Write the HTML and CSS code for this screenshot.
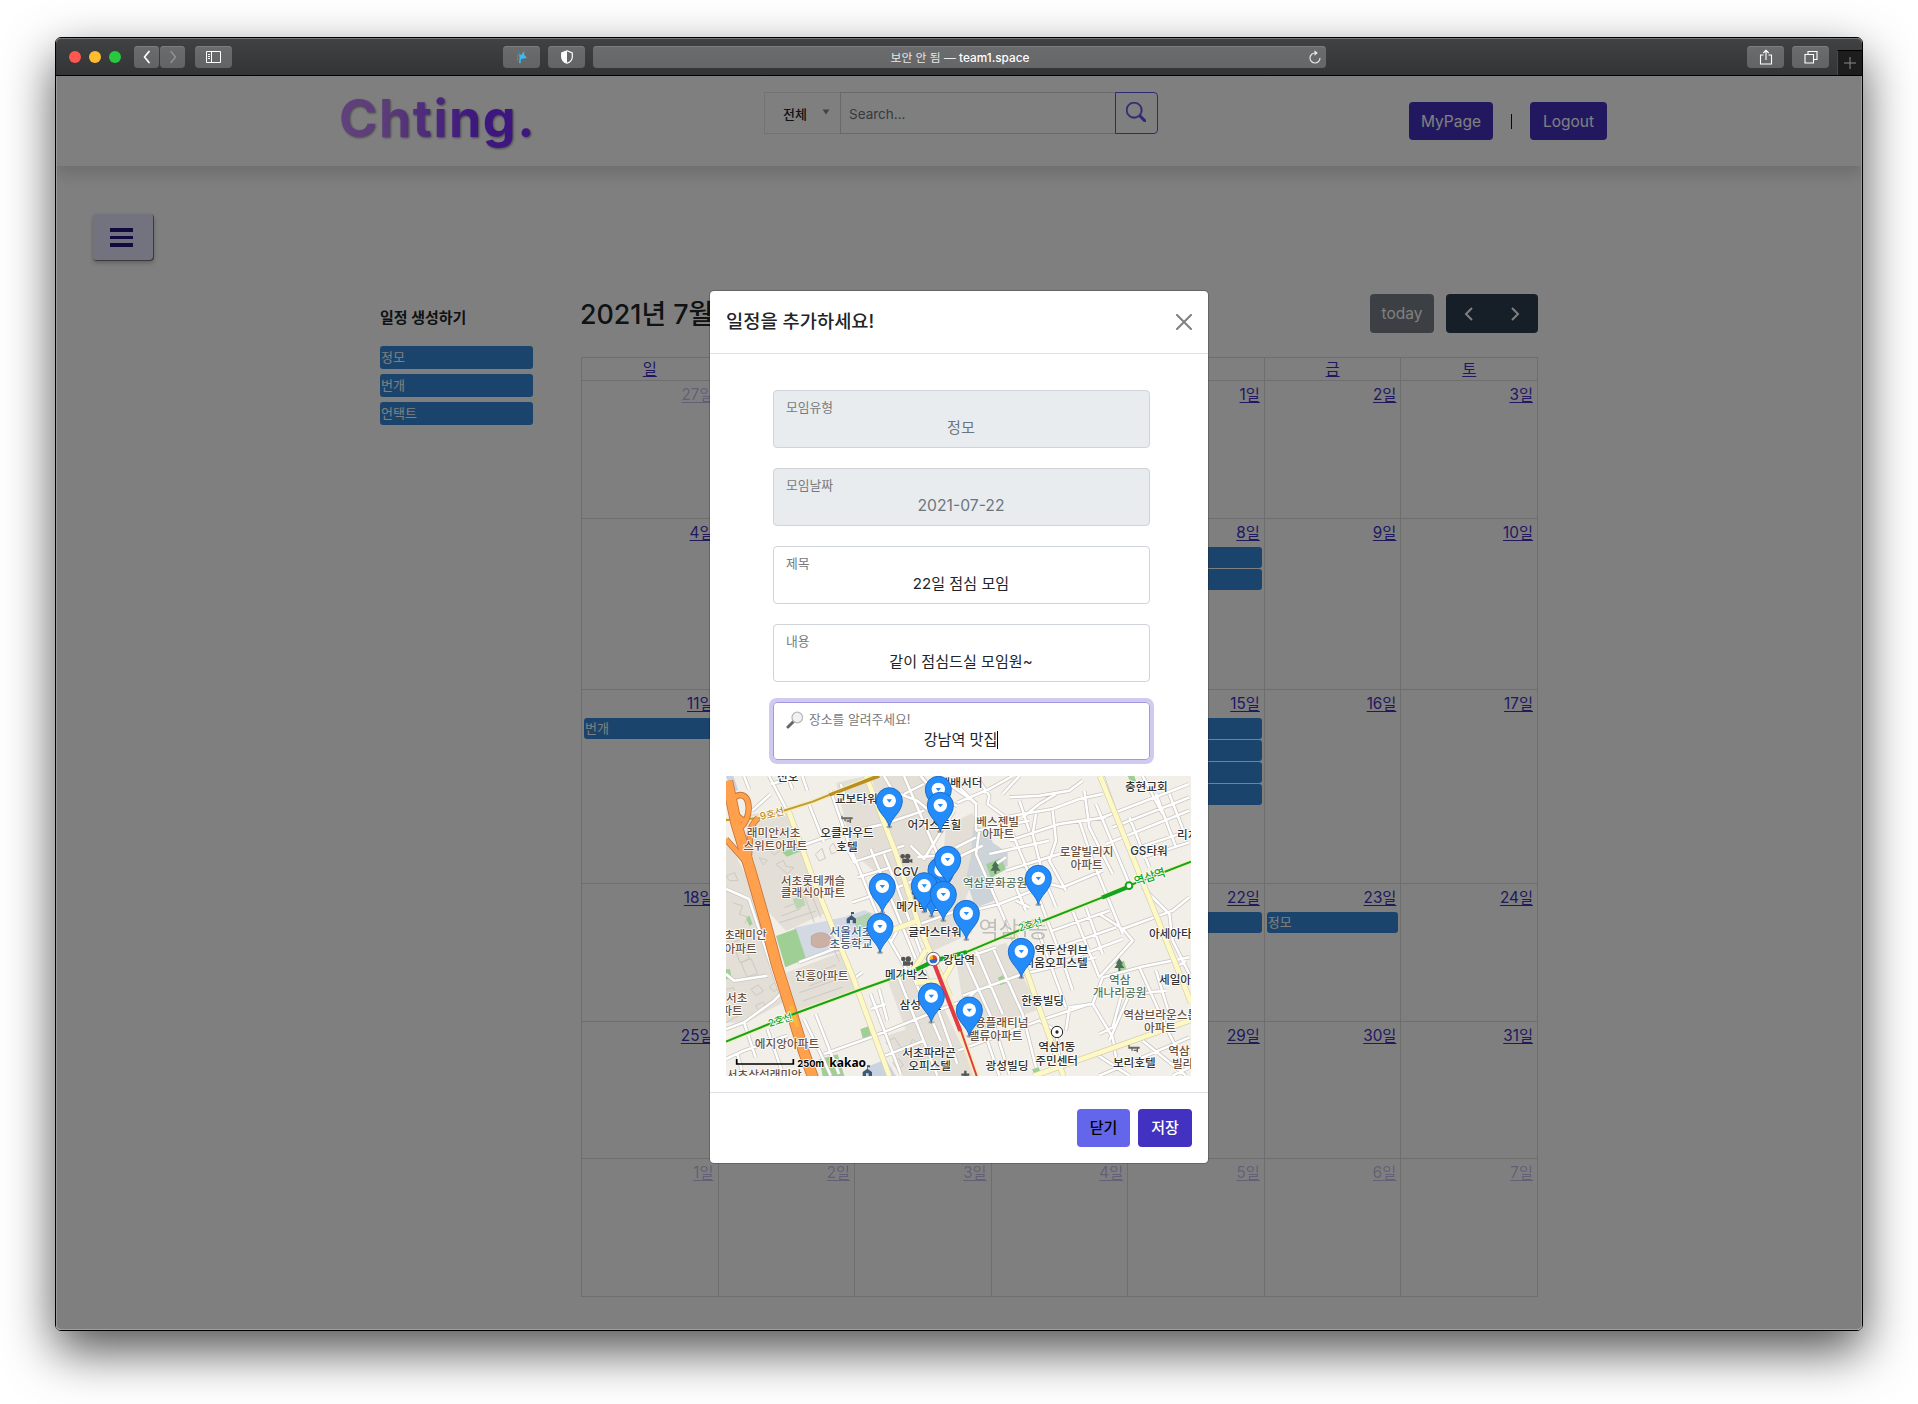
FILE: index.html
```html
<!DOCTYPE html>
<html lang="ko">
<head>
<meta charset="utf-8">
<title>team1.space</title>
<link rel="stylesheet" href="styles.css">
</head>
<body>
<div class="window">
  <div class="toolbar">
    <div class="lights"><i class="red"></i><i class="yellow"></i><i class="green"></i></div>
    <div class="tb-btn back"><svg width="10" height="16" viewBox="0 0 10 16"><path d="M7 2.500 2.500 8 7 13.500" fill="none" stroke="#fff" stroke-width="1.7" stroke-linecap="round" stroke-linejoin="round"/></svg></div>
    <div class="tb-btn fwd"><svg width="10" height="16" viewBox="0 0 10 16"><path d="M3 2.500 7.500 8 3 13.500" fill="none" stroke="#919293" stroke-width="1.5" stroke-linecap="round" stroke-linejoin="round"/></svg></div>
    <div class="tb-btn side"><svg width="15" height="13" viewBox="0 0 15 13"><path d="M.5.5h14v11H.500zM5.500.5v11M2 3.500h2M2 5.500h2M2 7.500h2" fill="none" stroke="#fff" stroke-width="1"/></svg></div>
    <div class="tb-btn ext"><svg width="14" height="14" viewBox="0 0 14 14"><path d="M4 4 6 5 9.500 1 9 4.500 12 8 8.500 8.500 6 9 5.500 13.500 4 13l.5-5z" fill="#37bdf2"/><path d="M2.500 4.500V11M4.500 1.500 2.500 4.500" stroke="#2c93c4" fill="none"/></svg></div>
    <div class="tb-btn shield"><svg width="14" height="14" viewBox="0 0 14 14"><path d="M7 .8 12.300 3v4c0 3-2.300 5.200-5.300 6.300C4 12.200 1.700 10 1.700 7V3z" fill="none" stroke="#fff" stroke-width="1.2"/><path d="M7 .8v12.500C4 12.200 1.700 10 1.700 7V3z" fill="#fff"/></svg></div>
    <div class="url"><span>보안 안 됨 — <b>team1.space</b></span>
      <svg class="reload" width="14" height="15" viewBox="0 0 14 15"><path d="M12 8a5 5 0 1 1-5-5h1.500" fill="none" stroke="#e6e6e6" stroke-width="1.200"/><path d="M6.500.3 9.800 3 6.500 5.700z" fill="#e6e6e6"/></svg>
    </div>
    <div class="tb-btn share"><svg width="14" height="16" viewBox="0 0 14 16"><path d="M4.500 6H1.500v9h11V6h-3M7 11V1.500M4.300 4 7 1.300 9.700 4" fill="none" stroke="#fff" stroke-width="1.100"/></svg></div>
    <div class="tb-btn tabs"><svg width="14" height="14" viewBox="0 0 14 14"><path d="M1 4.500h8.500V13H1zM4 4.500V1.500h9v8H9.500" fill="none" stroke="#fff" stroke-width="1.100"/></svg></div>
    <div class="newtab"><svg width="12" height="12" viewBox="0 0 12 12"><path d="M6 0v12M0 6h12" stroke="#8b8b8b"/></svg></div>
  </div>

  <div class="page">
    <header class="header">
      <div class="logo">Chting.</div>
      <div class="search">
        <div class="select"><span>전체</span><svg width="8" height="6" viewBox="0 0 8 6"><path d="M.5.5h7L4 5.500z" fill="#888"/></svg></div>
        <div class="query">Search...</div>
        <div class="go"><svg width="20" height="20" viewBox="0 0 16 16" fill="#5d57e8" stroke="#5d57e8" stroke-width=".5"><path d="M11.742 10.344a6.500 6.500 0 1 0-1.397 1.398h-.001c.03.04.062.078.098.115l3.850 3.850a1 1 0 0 0 1.415-1.414l-3.850-3.850a1.007 1.007 0 0 0-.115-.1zM12 6.500a5.500 5.500 0 1 1-11 0 5.500 5.500 0 0 1 11 0z"/></svg></div>
      </div>
      <nav class="nav"><a class="btn">MyPage</a><i class="bar"></i><a class="btn">Logout</a></nav>
    </header>
    <main class="main">
      <div class="menu"><i></i><i></i><i></i></div>
      <div class="board">
        <aside class="aside">
          <h2>일정 생성하기</h2>
          <div class="chip">정모</div><div class="chip">번개</div><div class="chip">언택트</div>
        </aside>
        <section class="calendar">
          <div class="cal-bar">
            <h1>2021년 7월</h1>
            <div class="today">today</div>
            <div class="pager">
              <svg width="10" height="16" viewBox="0 0 10 16"><path d="M8 2 2 8l6 6" fill="none" stroke="#fff" stroke-width="2"/></svg>
              <svg width="10" height="16" viewBox="0 0 10 16"><path d="m2 2 6 6-6 6" fill="none" stroke="#fff" stroke-width="2"/></svg>
            </div>
          </div>
          <div class="grid">
            <div class="head"><a>일</a></div><div class="head"><a>월</a></div><div class="head"><a>화</a></div><div class="head"><a>수</a></div><div class="head"><a>목</a></div><div class="head"><a>금</a></div><div class="head"><a>토</a></div>
            <div class="day other"><a>27일</a></div><div class="day other"><a>28일</a></div><div class="day other"><a>29일</a></div><div class="day other"><a>30일</a></div><div class="day"><a>1일</a></div><div class="day"><a>2일</a></div><div class="day"><a>3일</a></div>
            <div class="day"><a>4일</a></div><div class="day"><a>5일</a></div><div class="day"><a>6일</a></div><div class="day"><a>7일</a></div><div class="day"><a>8일</a><p></p><p></p></div><div class="day"><a>9일</a></div><div class="day"><a>10일</a></div>
            <div class="day"><a>11일</a><p>번개</p></div><div class="day"><a>12일</a></div><div class="day"><a>13일</a></div><div class="day"><a>14일</a></div><div class="day"><a>15일</a><p></p><p></p><p></p><p></p></div><div class="day"><a>16일</a></div><div class="day"><a>17일</a></div>
            <div class="day"><a>18일</a></div><div class="day"><a>19일</a></div><div class="day"><a>20일</a></div><div class="day"><a>21일</a></div><div class="day"><a>22일</a><p></p></div><div class="day"><a>23일</a><p>정모</p></div><div class="day"><a>24일</a></div>
            <div class="day"><a>25일</a></div><div class="day"><a>26일</a></div><div class="day"><a>27일</a></div><div class="day"><a>28일</a></div><div class="day"><a>29일</a></div><div class="day"><a>30일</a></div><div class="day"><a>31일</a></div>
            <div class="day other"><a>1일</a></div><div class="day other"><a>2일</a></div><div class="day other"><a>3일</a></div><div class="day other"><a>4일</a></div><div class="day other"><a>5일</a></div><div class="day other"><a>6일</a></div><div class="day other"><a>7일</a></div>
          </div>
        </section>
      </div>
    </main>

    <div class="backdrop">
      <div class="modal">
        <div class="m-head"><span>일정을 추가하세요!</span><svg width="16" height="16" viewBox="0 0 16 16"><path d="m1 1 14 14M15 1 1 15" stroke="#7f7f7f" stroke-width="2" stroke-linecap="round"/></svg></div>
        <div class="m-body">
          <div class="field off"><label>모임유형</label><div>정모</div></div>
          <div class="field off"><label>모임날짜</label><div class="date">2021-07-22</div></div>
          <div class="field"><label>제목</label><div>22일 점심 모임</div></div>
          <div class="field"><label>내용</label><div>같이 점심드실 모임원~</div></div>
          <div class="field focus"><label><svg width="18" height="18" viewBox="0 0 18 18"><path d="m2 16 5.500-5.500" stroke="#66666a" stroke-width="3" stroke-linecap="round"/><circle cx="11.300" cy="6.500" r="5.300" fill="#f0f1f2" stroke="#b9babb" stroke-width="1.300"/></svg>장소를 알려주세요!</label><div><span class="typed">강남역 맛집</span></div></div>
          <svg class="map" viewBox="0 0 1395 900">
            <defs>
              <g id="pin"><ellipse cx="0" cy="79" rx="9" ry="4" fill="#777" opacity=".6"/><path d="M0 79C-5 50-39 35-39 0a39 39 0 0 1 78 0C39 35 5 50 0 79z" fill="#238cfa" stroke="#1b6dca" stroke-width="3"/><circle r="20" fill="#fff"/><path d="M-8-4H8L0 6z" fill="#238cfa"/></g>
              <path id="tree" d="M0-20 11-4H6L15 9H3v9h-6V9h-12L-6-4h-5z" fill="#4c6f58"/>
              <g id="school" fill="#3e5878"><path d="M-14 16V2L0-8 14 2v14H4V6h-8v10z"/><path d="M-1-18h9v6H1v6h-2z"/></g>
              <g id="bed" fill="#666"><path d="M-17-13h4v5h30v6h-5V9H8V5h-9v-4h9v-3h-12v6h-4v-6h-9z"/></g>
              <g id="cam" fill="#555"><circle cx="-11" cy="-7" r="7"/><circle cx="4" cy="-7" r="8"/><path d="M-12 0h21v4l9-4v13l-9-4v4h-21z"/></g>
            </defs>
            <rect width="1395" height="900" fill="#f2efe9"/>
            <g fill="#e3dfd7">
              <path d="M50 120 185 97 270 332 300 410 180 465 120 400zM0 180l60 120 60 170 45 150L0 640z"/>
              <path d="M180 590l175-65 50 120-190 65zM0 640l160-20 10 60-110 60H0z"/>
              <path d="M330 20 420 0l90 232 70 220-50 18-80-180-70-60zM435 0h160l80 110-60 120 65 20 60 220-130 60-80-200z"/>
              <path d="M480 600l120-20 150 320H590zM690 550l150-50 100 200-215 75zM660 150l80-40 30 120-70 190-60-60z"/>
              <path d="M480 780l60-20 50 140h-60z"/>
            </g>
            <path d="M205 455l150-32 60-20 55 20 20 50-120 45-130 37z" fill="#d3d9e2"/>
            <path d="M742 150 790 160l10 40 45 30 0 40-40 20-2 85-55 20-28-85 15-70z" fill="#ccd3d9"/>
            <path d="M430 870l50-20 30 50h-90z" fill="#c9d4e2"/><path d="M0 0h22l15 42-20 8z" fill="#c9d4e2"/>
            <path d="M256 480q25-18 50-4 20 22-5 35-30 10-45-5z" fill="#cdb0a4" stroke="#b99" stroke-width="2"/>
            <g fill="#9fcf95">
              <path d="M150 480l60-22 30 90-62 26zM280 850l55-15 20 65h-65zM403 760l32-12 8 32-32 10zM780 265l45-20 15 35-45 25zM816 605l16-8 8 25-18 6zM918 880l20-6 10 26h-20zM1205 0l20 0 6 18-16 4zM1178 560l16-6 8 28-20 4zM60 425l10-6 10 25-10 6zM0 580h12l5 25-17 5zM168 228l52-18 8 14-45 18z"/>
              <path d="M200 370l30-12 8 30-26 12zM380 430l50-20 15 35-50 20z" opacity=".6"/>
            </g>
            <g fill="none" stroke="#cdc9c3" stroke-width="3">
              <path d="M20 380l30 10-10 25 25 8-8 20M20 500l30-12 20 60-28 12zM45 560l30-12 20 45-32 10zM115 205l20-12 8 22 20 8-18 14zM150 265l22-12 8 18 24 4-20 18zM268 235l20-18 10 30-18 8zM310 215l12-14 12 25-18 8zM100 245l24 8-12 14zM0 300l26-10 10 24H10zM215 560l110-38 15 35M240 600l90-33M250 630l100-38M220 650l110-38M230 675l120-42M75 640l22-13 15 18-22 14zM88 690l22-12 14 16-22 12zM130 632l16-12 12 15-14 12zM0 640l22-5 8 20-25 6M0 740l50-28M160 440l110-35M165 420l60-22M225 330l40 110M235 305l50 120M175 395l30-12M480 800l25-15 20 30-18 15zM540 830l20-40 25 20M500 860l18-12 14 20-18 12z"/>
            </g>
            <g id="streets" fill="none" stroke-linejoin="round">
              <path transform="translate(-6 -6)" d="M6 345 75 375 100 450 150 600 170 660M6 600 30 620 130 605M6 765 60 745 150 680 170 660M6 855 60 830 190 785M60 745 95 850M130 765l45 130M40 840l18 65M225 565 330 525 365 520M60 6 75 45M85 110 140 60M140 30 200 15M135 6 200 130M235 215 290 195 480 150 600 110M255 90 300 205M320 50 375 210 480 470 550 590M235 6 250 50M190 6 205 45M350 30l20 60M385 265 540 215M400 310 500 280M385 385 460 360M440 225 520 420 575 555M480 240 520 340 600 560M375 235 395 268M240 735 300 860 320 905M275 720 345 900M300 840 440 790 640 710 720 680M440 660 530 900M465 645 490 740M440 705 485 690M520 600 640 905M560 590 650 800M395 610l20-15M470 850 600 800M480 6 530 90M500 50 580 80 640 130M540 6 640 240M560 215 600 255 690 110M580 250 700 240M540 60 600 30M590 6l50 60 60 30M520 340 620 300M560 460 700 410M500 505 520 470M600 590 700 870M640 6 760 90"/>
              <path transform="translate(690 -6)" d="M6 85 100 45 170 6M0 30 60 90 60 170M60 6 100 65 95 90 150 130 200 120 290 105 370 75 440 60M140 60 190 6M160 70 250 65 340 50 380 20M200 130 250 90 300 60M70 170 60 240 130 400 200 560M170 180 240 350 320 560 350 650M190 80 220 170M240 120 230 180 260 300 300 400M290 110 300 200 280 260 330 350M370 140 410 260 500 480M385 50 400 160 470 300M420 90 520 330M440 6 480 120M520 130 580 280M560 6 620 120M600 60 660 220M640 60 690 190M640 95l60-25M6 250 80 215M0 220 60 190M60 170 220 140M160 200 310 150 450 130M100 240 280 200M120 270 150 250M150 290 310 240M440 130 700 30M470 160 700 70M450 210 700 110M550 220 700 170M560 250 700 205M6 420 130 390 280 330 320 340 440 290M180 380l40 20M210 410l-30-70M290 470 460 410M310 520 480 460M330 560 500 495M350 410 430 610M390 400 440 540M430 420 500 465 650 410 700 370M500 465 530 500 430 610M560 340 640 420 650 500 700 600M440 610 550 580 700 550M6 560 120 520M20 665 200 600 420 550M6 700 60 650M340 700 410 690 440 610M340 700 330 770M410 690 470 790M6 830 250 740 400 690M250 740 300 770 310 850M460 640 520 660 630 650M500 650 470 760 430 780M470 790 480 850M520 660 460 800M600 590 640 720M550 580 640 780 690 880M420 840 520 905M60 700 130 905M20 540 110 740 160 900M60 530 140 720M110 520 200 720 240 880M250 480 330 700M560 800 690 905M430 905 560 850 700 790M650 905 700 880M660 580 690 560"/>
            </g>
            <use href="#streets" stroke="#c9c6c1" stroke-width="12"/><use href="#streets" stroke="#fff" stroke-width="7.500"/>
            <g fill="none" stroke-linejoin="round">
              <g stroke="#d5ceb0" stroke-width="18"><path d="M185 97 270 332 380 602 490 900M420 0l90 232 70 220 42 98 50 110M1122 0l170 422 103 258M862 472l80 230 70 198M922 900l250-88 223-80M500 462l80-30M600 520q-20 40-40 60M570 620l80-5 40-70"/></g>
              <g stroke="#fdf8c4" stroke-width="14"><path d="M185 97 270 332 380 602 490 900M420 0l90 232 70 220 42 98 50 110M1122 0l170 422 103 258M862 472l80 230 70 198M922 900l250-88 223-80M500 462l80-30M600 520q-20 40-40 60M570 620l80-5 40-70"/>
              <path d="M0 797l195-80 205-75 170-60 52-32 90-18 120-50 290-115 87-38 186-72" stroke="#f4edbe"/><path d="M0 132l100-5 160-50L450 0" stroke="#f4edbe"/></g>
              <path d="M0 132l100-5 160-50L450 0" stroke="#c29a2c" stroke-width="6"/><path d="M310 57 460 0" stroke="#b98e1d" stroke-width="10"/>
              <g id="ramps"><path class="ramp-edge" d="M66 290 72 190Q66 155 96 126M40 160Q70 130 68 92 66 58 42 57 16 60 18 92 24 118 60 138M0 190l60 68"/></g>
              <path d="M4 15l26 125 48 160 40 140 35 130 38 120 40 130 32 90" stroke="#c9743a" stroke-width="35"/>
              <path class="ramp" d="M66 290 72 190Q66 155 96 126M40 160Q70 130 68 92 66 58 42 57 16 60 18 92 24 118 60 138M0 190l60 68"/>
              <path d="M4 15l26 125 48 160 40 140 35 130 38 120 40 130 32 90" stroke="#ffa04d" stroke-width="30"/>
              <path d="M195 690l18 62" stroke="#f6b93b" stroke-width="11"/>
              <path d="M0 797l195-80 205-75 170-60 52-32 90-18 120-50 290-115 87-38 186-72" stroke="#12a51c" stroke-width="6"/>
              <path d="M560 586l62-30 100-28M1128 365l81-33" stroke="#12a51c" stroke-width="12"/>
              <path d="M630 570l42 105 80 225" stroke="#f5eebd" stroke-width="18"/><path d="M625 565l78 200" stroke="#e23a49" stroke-width="12"/><path d="M700 750l52 150" stroke="#e23a49" stroke-width="6"/>
            </g>
            <circle cx="1209" cy="329" r="10" fill="#fff" stroke="#12a51c" stroke-width="6"/>
            <circle cx="622" cy="549" r="20" fill="#fff" stroke="#666" stroke-width="3"/><path d="M610 549a12 12 0 0 1 20-9l-8 11z" fill="#f6b81e"/><path d="M620 538a12 12 0 0 1 14 12l-12 2z" fill="#e8413b"/><path d="M634 549a12 12 0 0 1-24 2l12-2z" fill="#2f6bd0"/>
            <use href="#bed" x="363" y="132"/><use href="#bed" x="1224" y="820"/><use href="#cam" x="541" y="248"/><use href="#cam" x="543" y="556"/><use href="#cam" x="575" y="357"/>
            <use href="#school" x="376" y="426"/><use href="#school" x="424" y="886"/><use href="#tree" x="808" y="275"/><use href="#tree" x="1180" y="567"/>
            <path d="M718 884v16M706 896h24" stroke="#555" stroke-width="7"/>
            <circle cx="993" cy="768" r="17" fill="#fff" stroke="#222" stroke-width="3"/><circle cx="993" cy="768" r="5" fill="#222"/>
            <g class="watermark"><text x="862" y="482">역삼1동</text></g>
            <g class="lbl" text-anchor="middle">
              <text x="185" y="14">신호</text><text x="391" y="80">교보타워</text><text x="363" y="184">오클라우드</text><text x="363" y="225">호텔</text><text x="625" y="160">어거스트힐</text><text x="540" y="299">CGV</text><text x="575" y="406">메가박스</text><text x="627" y="480">글라스타워</text><text x="541" y="608">메가박스</text><text x="699" y="565">강남역</text><text x="585" y="700">삼성타운</text><text x="609" y="844">서초파라곤</text><text x="611" y="882">오피스텔</text><text x="705" y="33">앰배서더</text>
              <text x="1261" y="44">충현교회</text><text x="1269" y="236">GS타워</text><text x="1385" y="190">리치</text><text x="1333" y="485">아세아타</text><text x="1006" y="533">역두산위브</text><text x="989" y="573">리움오피스텔</text><text x="1347" y="624">세일아</text><text x="950" y="686">한동빌딩</text><text x="992" y="824">역삼1동</text><text x="992" y="867">주민센터</text><text x="1225" y="874">보리호텔</text><text x="843" y="883">광성빌딩</text>
            </g>
            <g class="lbl brown" text-anchor="middle">
              <text x="143" y="182">래미안서초</text><text x="148" y="221">스위트아파트</text><text x="261" y="327">서초롯데캐슬</text><text x="261" y="364">클래식아파트</text><text x="58" y="490">초래미안</text><text x="44" y="530">아파트</text><text x="287" y="611">진흥아파트</text><text x="32" y="678">서초</text><text x="18" y="717">파트</text><text x="183" y="815">에지앙아파트</text><text x="115" y="910">서초삼성래미안</text>
              <text x="815" y="150">베스젠빌</text><text x="817" y="187">아파트</text><text x="1082" y="240">로얄빌리지</text><text x="1082" y="278">아파트</text><text x="811" y="752">쌍용플래티넘</text><text x="809" y="792">밸류아파트</text><text x="1304" y="730">역삼브라운스톤</text><text x="1302" y="767">아파트</text><text x="1359" y="837">역삼</text><text x="1370" y="875">빌라</text>
            </g>
            <g class="lbl blue" text-anchor="middle"><text x="375" y="481">서울서초</text><text x="375" y="517">초등학교</text></g>
            <g class="lbl park" text-anchor="middle"><text x="807" y="334">역삼문화공원</text><text x="1181" y="624">역삼</text><text x="1181" y="663">개나리공원</text></g>
            <g class="lbl line2" text-anchor="middle"><text transform="translate(166 742) rotate(-17)">2호선</text><text transform="translate(916 456) rotate(-17)">2호선</text><text class="stn" transform="translate(1275 314) rotate(-18)">역삼역</text></g>
            <g class="lbl line9" text-anchor="middle"><text transform="translate(140 124) rotate(-13)">9호선</text></g>
            <use href="#pin" x="490" y="74"/><use href="#pin" x="637" y="40"/><use href="#pin" x="643" y="88"/><use href="#pin" x="645" y="282"/><use href="#pin" x="665" y="250"/><use href="#pin" x="617" y="342"/><use href="#pin" x="595" y="329"/><use href="#pin" x="652" y="355"/><use href="#pin" x="469" y="331"/><use href="#pin" x="462" y="451"/><use href="#pin" x="616" y="660"/>
            <use href="#pin" x="937" y="307"/><use href="#pin" x="721" y="412"/><use href="#pin" x="886" y="526"/><use href="#pin" x="730" y="702"/>
            <path d="M32 849v15h170v-15" fill="none" stroke="#000" stroke-width="5"/>
            <text class="scale" x="214" y="872">250m</text><text class="kakao" x="310" y="872">kakao</text>
          </svg>
        </div>
        <div class="m-foot"><a class="close">닫기</a><a class="save">저장</a></div>
      </div>
    </div>
  </div>
</div>
</body>
</html>
```
FILE: styles.css
```css
* { box-sizing: border-box; }
body {
  margin: 0;
  width: 1918px;
  height: 1404px;
  overflow: hidden;
  background: #fff;
  color: #212529;
  font: 15px/20px Inter, "Noto Sans CJK KR", sans-serif;
  display: flow-root;
}
h1, h2, p { margin: 0; }

/* browser window */
.window {
  display: flex;
  flex-direction: column;
  width: 1808px;
  height: 1294px;
  margin: 37px 55px;
  border: 1px solid #000;
  border-radius: 6px;
  box-shadow: 0 20px 50px rgba(0, 0, 0, .68);
}
.toolbar {
  display: flex;
  align-items: flex-start;
  height: 38px;
  padding: 8px 0 0 13px;
  border-bottom: 1px solid #000;
  border-radius: 5px 5px 0 0;
  background: linear-gradient(#414243, #333435);
  box-shadow: inset 0 1px #757677;
}
.lights { display: flex; gap: 8px; padding-top: 5px; }
.lights i { width: 12px; height: 12px; border-radius: 50%; }
.red { background: #ff5650; }
.yellow { background: #febc2e; }
.green { background: #28c83f; }
.tb-btn {
  display: flex;
  align-items: center;
  justify-content: center;
  width: 37px;
  height: 22px;
  border-radius: 4px;
  background: linear-gradient(#6b6c6e, #626365);
  box-shadow: inset 0 1px #7c7d7e;
}
.back { width: 25px; margin-left: 13px; }
.fwd { width: 25px; margin-left: 1px; }
.side { margin-left: 10px; }
.ext { margin-left: 271px; }
.shield { margin-left: 8px; }
.url {
  display: flex;
  align-items: center;
  width: 733px;
  height: 22px;
  margin-left: 8px;
  padding: 1px 4px 0 19px;
  border-radius: 4px;
  background: linear-gradient(#6b6c6e, #656668);
  box-shadow: inset 0 1px #7c7d7e;
  color: #e8e8e8;
  font-size: 11.800px;
}
.url span { flex: 1; text-align: center; }
.url b { color: #fff; font-weight: 500; }
.share { margin-left: 421px; }
.tabs { margin-left: 8px; }
.newtab {
  display: flex;
  align-items: center;
  justify-content: center;
  width: 25px;
  height: 25px;
  margin: 4px 0 0 8px;
  border-top: 1px solid #000;
  border-left: 1px solid #4a4a4a;
  background: #1d1d1d;
}

/* page */
.page {
  position: relative;
  flex: 1;
  background: #fff;
  border-radius: 0 0 5px 5px;
  overflow: hidden;
}
.header {
  display: flex;
  align-items: flex-start;
  height: 90px;
  padding-left: 283px;
  box-shadow: 0 8px 16px rgba(0, 0, 0, .15);
}
.logo {
  width: 425px;
  height: 74px;
  padding-top: 8px;
  font-size: 52px;
  line-height: 70px;
  font-weight: 700;
  letter-spacing: 1.500px;
  background: linear-gradient(90deg, #c084f8 0, #b978f2 45px, #7a2cff 140px);
  -webkit-background-clip: text;
  background-clip: text;
  color: transparent;
  filter: drop-shadow(1px 1.500px 1px rgba(0, 0, 0, .45));
}
.search { display: flex; height: 42px; margin-top: 16px; }
.select {
  display: flex;
  align-items: center;
  width: 76px;
  padding: 1px 10px 0 18px;
  border: 1px solid #e6e6e6;
  border-right: 0;
  font-size: 13px;
  font-weight: 500;
  justify-content: space-between;
}
.select svg { margin-bottom: 4px; }
.query {
  width: 275px;
  padding: 11px 8px;
  border: 1px solid #ced4da;
  border-right: 0;
  color: #6c757d;
  font-size: 13.500px;
}
.go {
  display: flex;
  justify-content: center;
  width: 43px;
  padding: 9px 2px 0 0;
  border: 1px solid #5d57e8;
  border-radius: 0 4px 4px 0;
}
.nav { display: flex; align-items: center; margin: 26px 0 0 251px; }
.btn {
  width: 84px;
  height: 38px;
  border-radius: 4px;
  background: #4331c1;
  color: #fff;
  font-size: 15.500px;
  line-height: 39px;
  text-align: center;
}
.btn + .bar { width: 1px; height: 15px; margin: 0 18px; background: #111; }
.bar + .btn { width: 77px; }
.main { padding: 48px 0 0 37px; }
.menu {
  display: flex;
  flex-direction: column;
  gap: 4px;
  width: 61px;
  height: 47px;
  padding: 14px 17px;
  border-radius: 4px;
  background: #e7e6ff;
  box-shadow: inset -1px -1px #777, 0 2px 4px rgba(0, 0, 0, .25);
}
.menu i { width: 23px; height: 4px; background: #22147c; }
.board { display: flex; gap: 48px; margin-top: 33px; padding-left: 287px; }
.aside { display: flex; flex-direction: column; gap: 5px; width: 153px; padding-top: 14px; }
.aside h2 { height: 33px; font-size: 15px; font-weight: 700; color: #212529; }
.chip {
  height: 23px;
  padding-left: 1px;
  border-radius: 3px;
  background: #3788d8;
  color: #fff;
  font-size: 13px;
  line-height: 23px;
}

/* calendar */
.calendar { width: 957px; }
.cal-bar { display: flex; align-items: center; height: 39px; margin-bottom: 24px; }
.cal-bar h1 { flex: 1; font-size: 26.800px; font-weight: 500; line-height: 36px; text-indent: -1px; }
.today, .pager { height: 39px; border-radius: 4px; color: #fff; }
.today { width: 64px; margin-right: 12px; background: #78808a; font-size: 15.500px; line-height: 39px; text-align: center; }
.pager { display: flex; align-items: center; justify-content: space-between; width: 92px; padding: 0 18px; background: #2c3e50; }
.grid {
  display: grid;
  grid-template-columns: repeat(7, 1fr);
  grid-template-rows: 23px 138px 171px 194px 138px 137px 138px;
  border-top: 1px solid #ddd;
  border-left: 1px solid #ddd;
}
.head, .day { border-right: 1px solid #ddd; border-bottom: 1px solid #ddd; }
.head a, .day a { color: #4331c1; font-size: 15.300px; text-decoration: underline; text-underline-offset: 2px; }
.head { text-align: center; line-height: 22px; }
.day { padding: 0 2px; }
.day a { display: block; margin-bottom: 3px; padding: 2px 2px 0 0; line-height: 23px; text-align: right; }
.other a { opacity: .3; }
.day p {
  height: 21px;
  margin-bottom: 1px;
  padding-left: 1px;
  border-radius: 3px;
  background: #3788d8;
  color: #fff;
  font-size: 13px;
  line-height: 21px;
}

/* dialog */
.backdrop {
  position: absolute;
  inset: 0;
  padding: 214px 0 0 653px;
  border-radius: 0 0 5px 5px;
  background: rgba(0, 0, 0, .5);
  box-shadow: inset 0 -1px #a0a0a0, inset 1px 0 #999, inset -1px 0 #999;
}
.modal {
  width: 500px;
  height: 874px;
  border: 1px solid rgba(0, 0, 0, .2);
  border-radius: 5px;
  background: #fff;
  background-clip: padding-box;
}
.m-head {
  display: flex;
  align-items: center;
  justify-content: space-between;
  height: 63px;
  padding: 0 16px;
  border-bottom: 1px solid #dee2e6;
  font-size: 18.700px;
  font-weight: 500;
}
.m-body { display: flex; flex-direction: column; align-items: center; gap: 20px; height: 738px; padding: 36px 16px 0; }
.field {
  width: 377px;
  height: 58px;
  margin-left: 5px;
  padding: 10px 12px;
  border: 1px solid #ced4da;
  border-radius: 4px;
  text-align: center;
}
.field label {
  display: flex;
  align-items: center;
  height: 14px;
  color: #77797c;
  font-size: 12.800px;
  line-height: 14px;
}
.field label svg { margin-right: 5px; }
.field div { margin: 3px 1px 0 0; font-size: 15.100px; line-height: 19px; }
.field .date { font-size: 15.700px; }
.off { background: #e9ecef; color: #6c757d; }
.focus { border-color: #a198e0; box-shadow: 0 0 0 4px #d0caf0; }
.typed { display: inline-block; border-right: 1px solid #000; line-height: 18px; }
.map { display: block; width: 465px; height: 300px; margin: -4px 1px 0 0; flex: none; }
.ramp-edge { stroke: #c9743a; stroke-width: 19px; }
.ramp { stroke: #ffa04d; stroke-width: 14px; }
.lbl { fill: #333; font-size: 35px; font-weight: 500; stroke: #fff; stroke-width: 5px; stroke-linejoin: round; paint-order: stroke; }
.brown { fill: #6b5344; }
.blue { fill: #476285; }
.park { fill: #587562; }
.line2 { fill: #12a51c; font-size: 30px; font-weight: 500; }
.line2 .stn { font-size: 35px; }
.line9 { fill: #b98e1d; font-size: 30px; }
.watermark { fill: #777; font-size: 66px; opacity: .4; text-anchor: middle; }
.scale { font-size: 28px; font-weight: 700; stroke: #fff; stroke-width: 4px; paint-order: stroke; }
.kakao { font-family: "Noto Sans", sans-serif; font-size: 36px; font-weight: 700; stroke: #fff; stroke-width: 4px; paint-order: stroke; }
.m-foot {
  display: flex;
  justify-content: flex-end;
  gap: 8px;
  padding: 16px 16px 0;
  border-top: 1px solid #dee2e6;
}
.m-foot a { height: 38px; border-radius: 4px; font-weight: 500; line-height: 38px; text-align: center; }
.close { width: 53px; background: #6366eb; color: #000; }
.save { width: 54px; background: #4331c1; color: #fff; }
```
